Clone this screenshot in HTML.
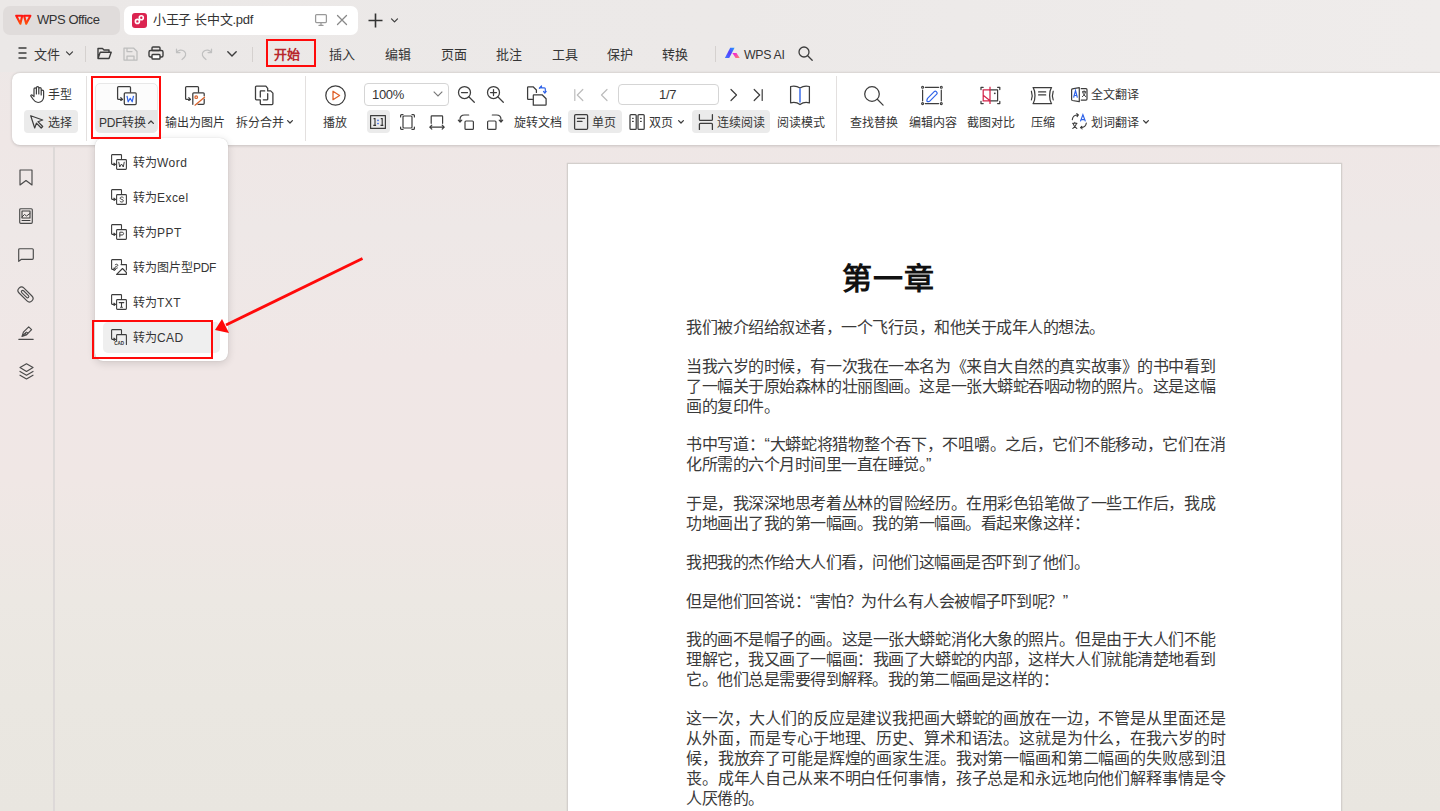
<!DOCTYPE html>
<html lang="zh-CN"><head><meta charset="utf-8">
<style>
*{margin:0;padding:0;box-sizing:border-box}
html,body{width:1440px;height:811px;overflow:hidden}
body{background:linear-gradient(180deg,#ECE8E7 0px,#EFE7E6 140px,#EEE8E7 230px,#F0E7E6 360px,#F0E7E5 480px,#ECE8E3 600px,#EAE7E1 700px,#E9E6E0 811px);font-family:"Liberation Sans",sans-serif;color:#333;position:relative}
.a{position:absolute}
.t{position:absolute;white-space:nowrap;font-size:12px;line-height:16px;color:#353535}
.m{font-size:13px;line-height:18px;top:46px}
svg{position:absolute;overflow:visible}
svg .s{fill:none;stroke:#3d3d3d;stroke-width:1.25;stroke-linecap:round;stroke-linejoin:round}
svg .g{fill:none;stroke:#bcbcbc;stroke-width:1.25;stroke-linecap:round;stroke-linejoin:round}
.btnbg{position:absolute;background:#EBEBEB;border-radius:4px}
.sep{position:absolute;width:1px;background:#E3E0DF}
.doc .l{position:absolute;left:686px;white-space:nowrap;font-size:16px;letter-spacing:-0.5px;line-height:20px;color:#3a3a3a}
.doc .j{width:529px;white-space:normal;text-align:justify;text-align-last:justify;height:20px;overflow:visible}
.doc .w{width:539px}
</style></head><body>
<!-- ===== top bar ===== -->
<div class="a" style="left:0;top:0;width:1440px;height:72px;background:linear-gradient(90deg,#EBE8E7,#ECE9E8 50%,#EFECEB)"></div>
<div class="a" style="left:3px;top:6px;width:117px;height:29px;background:#E0DCDB;border-radius:7px"></div>
<svg style="left:0;top:0" width="40" height="40" viewBox="0 0 40 40"><defs><linearGradient id="wl" x1="0" y1="14" x2="0" y2="25" gradientUnits="userSpaceOnUse"><stop offset="0" stop-color="#FF0A14"/><stop offset="1" stop-color="#FF5A0A"/></linearGradient></defs><path d="M16.2 15.7h6L20.4 23.7z M24.1 15.7h6.3L26.2 23.7z" fill="none" stroke="url(#wl)" stroke-width="2.1" stroke-linejoin="round"/></svg>
<div class="t" style="left:37px;top:11px;font-size:13px;line-height:18px;letter-spacing:-0.45px;color:#333">WPS Office</div>
<div class="a" style="left:124px;top:6px;width:234px;height:29px;background:#fff;border-radius:7px"></div>
<div class="a" style="left:132px;top:13px;width:15px;height:15px;background:#DB2450;border-radius:3px"></div>
<svg style="left:132px;top:13px" width="15" height="15" viewBox="0 0 15 15"><circle cx="5.4" cy="8.4" r="2" fill="none" stroke="#fff" stroke-width="1.6"/><circle cx="9.3" cy="4.8" r="2" fill="none" stroke="#fff" stroke-width="1.6"/></svg>
<div class="t" style="left:153px;top:11px;font-size:13px;line-height:18px;letter-spacing:-0.3px;color:#333">小王子 长中文.pdf</div>
<svg style="left:315px;top:14px" width="12" height="12" viewBox="0 0 12 12"><rect x="0.6" y="0.6" width="10.8" height="8" rx="1" class="g" style="stroke:#999"/><path d="M4 11.4h4M6 8.6v2.8" class="g" style="stroke:#999"/></svg>
<svg style="left:337px;top:15px" width="10" height="10" viewBox="0 0 10 10"><path d="M0.5 0.5l9 9M9.5 0.5l-9 9" class="g" style="stroke:#888"/></svg>
<svg style="left:368px;top:13px" width="15" height="15" viewBox="0 0 15 15"><path d="M7.5 0.5v14M0.5 7.5h14" fill="none" stroke="#333" stroke-width="1.6"/></svg>
<svg style="left:391px;top:18px" width="7" height="5" viewBox="0 0 7 5"><path d="M0.5 0.8l3 3 3-3" class="s" style="stroke-width:1.2"/></svg>

<!-- ===== menu row ===== -->
<svg style="left:18px;top:47px" width="9" height="12" viewBox="0 0 9 12"><path d="M0.5 1h8M0.5 6h8M0.5 11h8" fill="none" stroke="#3d3d3d" stroke-width="1.4"/></svg>
<div class="t m" style="left:34px">文件</div>
<svg style="left:66px;top:51px" width="7" height="5" viewBox="0 0 7 5"><path d="M0.5 0.8l3 3 3-3" class="s" style="stroke-width:1.2"/></svg>
<div class="sep" style="left:85px;top:46px;height:16px;background:#D5D1CF"></div>
<svg style="left:97px;top:47px" width="15" height="13" viewBox="0 0 15 13"><path d="M1 11.5V1.5h4.5l1.5 1.5h5v2M1 11.5l2.2-6.3h11L12 11.5z" class="s" style="stroke-width:1.4"/></svg>
<svg style="left:123px;top:47px" width="15" height="14" viewBox="0 0 15 14"><path d="M1 1h9.5l3.5 3.5V13H1z M4 1v3.5h5 M4 13V9h7v4" class="g" style="stroke:#bdbdbd"/></svg>
<svg style="left:148px;top:46px" width="16" height="14" viewBox="0 0 16 14"><rect x="4" y="1" width="8" height="3.5" rx="1" class="s" style="stroke-width:1.4"/><rect x="1" y="4.5" width="14" height="6.5" rx="1.5" class="s" style="stroke-width:1.4"/><rect x="4" y="8.5" width="8" height="4.5" rx="0.8" class="s" style="stroke-width:1.4;fill:#fff"/></svg>
<svg style="left:175px;top:48px" width="12" height="12" viewBox="0 0 12 12"><path d="M1.5 1v3.5h3.5M1.5 4.5C3 2 7 1 9.5 3.5s1 5.5-2.5 8" class="g" style="stroke:#c0c0c0"/></svg>
<svg style="left:201px;top:48px" width="12" height="12" viewBox="0 0 12 12"><path d="M10.5 1v3.5H7M10.5 4.5C9 2 5 1 2.5 3.5s-1 5.5 2.5 8" class="g" style="stroke:#c0c0c0"/></svg>
<svg style="left:227px;top:51px" width="10" height="6" viewBox="0 0 10 6"><path d="M0.8 0.8l4.2 4.2 4.2-4.2" class="s" style="stroke-width:1.4"/></svg>
<div class="sep" style="left:252px;top:47px;height:15px;background:#D5D1CF"></div>
<div class="t m" style="left:274px;color:#B8272C;font-weight:bold">开始</div>
<div class="a" style="left:274px;top:65px;width:25px;height:2px;background:#C41F1F"></div>
<div class="t m" style="left:329px">插入</div>
<div class="t m" style="left:385px">编辑</div>
<div class="t m" style="left:441px">页面</div>
<div class="t m" style="left:496px">批注</div>
<div class="t m" style="left:552px">工具</div>
<div class="t m" style="left:607px">保护</div>
<div class="t m" style="left:662px">转换</div>
<div class="sep" style="left:715px;top:46px;height:16px;background:#D5D1CF"></div>
<svg style="left:724px;top:47px" width="17" height="12" viewBox="0 0 17 12"><defs><linearGradient id="ai1" x1="0" y1="1" x2="1" y2="0"><stop offset="0" stop-color="#3C7BFF"/><stop offset="0.5" stop-color="#5A3CFF"/><stop offset="1" stop-color="#1FA0FF"/></linearGradient><linearGradient id="ai2" x1="0" y1="0" x2="1" y2="1"><stop offset="0" stop-color="#F010F0"/><stop offset="1" stop-color="#FF8A60"/></linearGradient></defs><path d="M0.9 11L6.2 0.8h4.4L5.2 11z" fill="url(#ai1)"/><path d="M8.4 5.9h4.1l3.2 5.1h-4.1z" fill="url(#ai2)"/></svg>
<div class="t m" style="left:744px;font-size:12.3px;letter-spacing:-0.3px">WPS AI</div>
<svg style="left:798px;top:46px" width="15" height="15" viewBox="0 0 15 15"><circle cx="6" cy="6" r="5" class="s" style="stroke-width:1.3"/><path d="M9.7 9.7l4.5 4.5" class="s" style="stroke-width:1.3"/></svg>

<!-- ===== ribbon ===== -->
<div class="a" style="left:12px;top:72px;width:1428px;height:73px;background:#fff;border-radius:8px 0 0 8px;border-top:1px solid #DCD8D6;box-shadow:0 1px 3px rgba(0,0,0,.17)"></div>
<div class="sep" style="left:86px;top:76px;height:65px"></div>
<div class="sep" style="left:305px;top:76px;height:65px"></div>
<div class="sep" style="left:836px;top:76px;height:65px"></div>

<!-- group 1 -->
<svg style="left:30px;top:86px" width="15" height="17" viewBox="0 0 15 17"><path d="M4 9V3a1.2 1.2 0 0 1 2.4 0v5V1.8a1.2 1.2 0 0 1 2.4 0V8V2.8a1.2 1.2 0 0 1 2.4 0V9V5.3a1.2 1.2 0 0 1 2.4 0V11c0 3-2.3 5.5-5.5 5.5c-2.3 0-3.6-1.2-4.8-3L0.9 10.2c-.5-.8.5-1.7 1.3-1.1L4 10.6z" class="s" style="stroke-width:1.2"/></svg>
<div class="t" style="left:48px;top:87px">手型</div>
<div class="btnbg" style="left:24px;top:110px;width:54px;height:23px"></div>
<svg style="left:30px;top:115px" width="14" height="14" viewBox="0 0 14 14"><path d="M0.7 0.7l12 4.3-4.8 1.7 4.8 4.8-1.5 1.5-4.8-4.8-1.7 4.8z" class="s" style="stroke-width:1.2"/></svg>
<div class="t" style="left:48px;top:115px">选择</div>

<!-- group 2 -->
<div class="a" style="left:95px;top:83px;width:63px;height:50px;border-radius:5px;background:#FCFCFC;border:1px solid #E8E8E8;overflow:hidden"><div class="a" style="left:-1px;top:26px;width:63px;height:23px;background:#E6E6E6"></div></div>
<svg style="left:117px;top:86px" width="20" height="19" viewBox="0 0 20 19"><path d="M13.5 6V1.6c0-.6-.4-1-1-1H1.6c-.6 0-1 .4-1 1v10.8c0 .6.4 1 1 1H5.5 M3.8 11.6l1.7 1.8-1.7 1" class="s" style="stroke-width:1.25"/><rect x="7.3" y="6.8" width="11.9" height="11.8" rx="1" class="s" style="stroke-width:1.25"/><path d="M10 9.8l1.2 6 2-3.5 2 3.5 1.3-6" fill="none" stroke="#2F63E8" stroke-width="1.2" stroke-linejoin="round"/></svg>
<div class="t" style="left:99px;top:115px;letter-spacing:-0.2px">PDF转换</div>
<svg style="left:148px;top:120px" width="6" height="4" viewBox="0 0 6 4"><path d="M0.6 3.4L3 1l2.4 2.4" class="s" style="stroke-width:1.3"/></svg>
<svg style="left:185px;top:86px" width="20" height="19" viewBox="0 0 20 19"><path d="M13.5 6V1.6c0-.6-.4-1-1-1H1.6c-.6 0-1 .4-1 1v10.8c0 .6.4 1 1 1H5.5 M3.8 11.6l1.7 1.8-1.7 1" class="s" style="stroke-width:1.25"/><path d="M7.8 18.3V7.8c0-.6.4-1 1-1h9.4c.6 0 1 .4 1 1v2 M19.2 13v4.3c0 .6-.4 1-1 1H13" class="s" style="stroke-width:1.25"/><circle cx="11.2" cy="11.2" r="1.3" fill="none" stroke="#D9622B" stroke-width="1.2"/><path d="M10 19.2L19.5 11.2" fill="none" stroke="#D9622B" stroke-width="1.25" stroke-linecap="round"/></svg>
<div class="t" style="left:165px;top:115px">输出为图片</div>
<svg style="left:244px;top:80px" width="40" height="30" viewBox="0 0 40 30"><path d="M16.3 19.8H12.5c-.6 0-1-.4-1-1V7.1c0-.6.4-1 1-1H21.9L23.7 8.3V10.9 M23.7 10.9H26.7L28.9 13.1V23.6c0 .6-.4 1-1 1H17.3c-.6 0-1-.4-1-1V19.8 M16.3 17V11.4c0-.3.2-.5.5-.5H20.7 M23.7 13.7V19.3c0 .3-.2.5-.5.5H19.3" class="s" style="stroke-width:1.3"/></svg>
<div class="t" style="left:236px;top:115px">拆分合并</div>
<svg style="left:287px;top:120px" width="6" height="4" viewBox="0 0 6 4"><path d="M0.6 0.6L3 3l2.4-2.4" class="s" style="stroke-width:1.3"/></svg>

<!-- group 3 -->
<svg style="left:325px;top:85px" width="21" height="21" viewBox="0 0 21 21"><circle cx="10.5" cy="10.5" r="9.7" class="s" style="stroke-width:1.25"/><path d="M8 6.3v8.4l6.6-4.2z" fill="none" stroke="#E0612A" stroke-width="1.3" stroke-linejoin="round"/></svg>
<div class="t" style="left:323px;top:115px">播放</div>
<div class="a" style="left:364px;top:83px;width:85px;height:23px;border:1px solid #D5D5D5;border-radius:4px;background:#fff"></div>
<div class="t" style="left:372px;top:86px;font-size:13px;line-height:18px;letter-spacing:-0.3px">100%</div>
<svg style="left:433px;top:91px" width="10" height="6" viewBox="0 0 10 6"><path d="M0.7 0.7l4.3 4.3 4.3-4.3" fill="none" stroke="#777" stroke-width="1.1"/></svg>
<svg style="left:458px;top:86px" width="17" height="17" viewBox="0 0 17 17"><circle cx="6.5" cy="6.5" r="6" class="s" style="stroke-width:1.25"/><path d="M3.5 6.5h6M10.8 10.8l5.5 5.5" class="s" style="stroke-width:1.25"/></svg>
<svg style="left:487px;top:86px" width="17" height="17" viewBox="0 0 17 17"><circle cx="6.5" cy="6.5" r="6" class="s" style="stroke-width:1.25"/><path d="M3.5 6.5h6M6.5 3.5v6M10.8 10.8l5.5 5.5" class="s" style="stroke-width:1.25"/></svg>
<svg style="left:527px;top:85px" width="20" height="21" viewBox="0 0 20 21"><path d="M5.5 14.3H1.2c-.4 0-.6-.3-.6-.6V2.4c0-.4.3-.6.6-.6h4.9l3.3 3.2v2.4" class="s" style="stroke-width:1.25"/><path d="M6.3 20.2v-9.8c0-.4.3-.6.6-.6h8.2l4 4v5.8c0 .4-.3.6-.6.6H6.9c-.4 0-.6-.3-.6-.6z" class="s" style="stroke-width:1.25"/><path d="M12.8 3.4l1.7-1.8v1.2h2.8c.6 0 1 .4 1 1v3.6 M16.5 6.4l1.3 1.8 1.4-1.8" fill="none" stroke="#2F63E8" stroke-width="1.2" stroke-linecap="round" stroke-linejoin="round"/><path d="M12.3 3.1l2.2-2.1" fill="none" stroke="#2F63E8" stroke-width="1.2" stroke-linecap="round"/></svg>
<div class="btnbg" style="left:367px;top:110px;width:23px;height:23px"></div>
<svg style="left:370px;top:115px" width="16" height="14" viewBox="0 0 16 14"><rect x="0.6" y="0.6" width="14.8" height="12.8" class="s" style="stroke-width:1.2"/><path d="M3.6 3.6h1.4v6.8M3.3 10.4h2.8M10.8 3.6h1.4v6.8M10.5 10.4h2.8" fill="none" stroke="#333" stroke-width="1.1"/><circle cx="8" cy="5.4" r="0.8" fill="#2F63E8"/><circle cx="8" cy="8.6" r="0.8" fill="#2F63E8"/></svg>
<svg style="left:400px;top:114px" width="15" height="16" viewBox="0 0 15 16"><rect x="3" y="2" width="9" height="12" rx="1" class="s" style="stroke-width:1.2"/><path d="M0.6 3V1.6c0-.6.4-1 1-1H3 M12 0.6h1.4c.6 0 1 .4 1 1V3 M14.4 13v1.4c0 .6-.4 1-1 1H12 M3 15.4H1.6c-.6 0-1-.4-1-1V13" class="s" style="stroke-width:1.2"/></svg>
<svg style="left:429px;top:115px" width="16" height="15" viewBox="0 0 16 15"><path d="M2.2 8.3V1.4c0-.4.3-.6.6-.6H13c.4 0 .6.3.6.6v6.9 M0.8 12.2h14.4 M2.8 10.2L0.8 12.2l2 2 M13.2 10.2l2 2-2 2" class="s" style="stroke-width:1.2"/></svg>
<svg style="left:458px;top:114px" width="16" height="16" viewBox="0 0 16 16"><path d="M10.7 1H6.5C3.7 1 2 2.6 2 5.5V8 M0.3 6.2L2 8l1.8-1.8" class="s" style="stroke-width:1.2"/><rect x="7" y="7" width="8.4" height="8.4" rx="1" class="s" style="stroke-width:1.2"/></svg>
<svg style="left:487px;top:114px" width="16" height="16" viewBox="0 0 16 16"><path d="M5.3 1h4.2C12.3 1 14 2.6 14 5.5V8 M15.7 6.2L14 8l-1.8-1.8" class="s" style="stroke-width:1.2"/><rect x="0.6" y="7" width="8.4" height="8.4" rx="1" class="s" style="stroke-width:1.2"/></svg>
<div class="t" style="left:514px;top:115px">旋转文档</div>

<!-- group 4 -->
<svg style="left:574px;top:89px" width="10" height="12" viewBox="0 0 10 12"><path d="M0.8 0.5v11M8.8 0.5L3.3 6l5.5 5.5" class="g" style="stroke-width:1.2"/></svg>
<svg style="left:600px;top:89px" width="8" height="12" viewBox="0 0 8 12"><path d="M7 0.5L1.5 6 7 11.5" class="g" style="stroke-width:1.2"/></svg>
<div class="a" style="left:618px;top:84px;width:101px;height:21px;border:1px solid #D5D5D5;border-radius:4px;background:#fff"></div>
<div class="t" style="left:659px;top:86px;font-size:13px;line-height:18px;letter-spacing:-0.3px">1/7</div>
<svg style="left:730px;top:89px" width="8" height="12" viewBox="0 0 8 12"><path d="M1 0.5L6.5 6 1 11.5" class="s" style="stroke-width:1.2"/></svg>
<svg style="left:753px;top:89px" width="10" height="12" viewBox="0 0 10 12"><path d="M9.2 0.5v11M1.2 0.5L6.7 6l-5.5 5.5" class="s" style="stroke-width:1.2"/></svg>
<svg style="left:790px;top:85px" width="20" height="20" viewBox="0 0 20 20"><path d="M0.6 1.5c3.5-.9 6.5-.5 9.4 1.6c2.9-2.1 5.9-2.5 9.4-1.6v16.4c-3.5-.9-6.5-.5-9.4 1.6c-2.9-2.1-5.9-2.5-9.4-1.6z" class="s" style="stroke-width:1.25"/><path d="M10 3.5v14" fill="none" stroke="#2F63E8" stroke-width="1.4"/></svg>
<div class="btnbg" style="left:568px;top:110px;width:54px;height:23px"></div>
<svg style="left:574px;top:114px" width="14" height="16" viewBox="0 0 14 16"><rect x="0.6" y="0.6" width="13" height="14.8" rx="1.2" class="s" style="stroke-width:1.25"/><path d="M3.4 4.3h7.3M3.4 7.4h4.6" class="s" style="stroke-width:1.2"/></svg>
<div class="t" style="left:592px;top:115px">单页</div>
<svg style="left:629px;top:114px" width="16" height="16" viewBox="0 0 16 16"><rect x="1" y="0.6" width="6.2" height="14.8" rx="1" class="s" style="stroke-width:1.25"/><rect x="9" y="0.6" width="6.2" height="14.8" rx="1" class="s" style="stroke-width:1.25"/><path d="M3.6 4.3h.6M3.6 7.4h.6M11.6 4.3h.6M11.6 7.4h.6" class="s" style="stroke-width:1.3"/></svg>
<div class="t" style="left:649px;top:115px">双页</div>
<svg style="left:678px;top:120px" width="6" height="4" viewBox="0 0 6 4"><path d="M0.6 0.6L3 3l2.4-2.4" class="s" style="stroke-width:1.3"/></svg>
<div class="btnbg" style="left:692px;top:110px;width:78px;height:23px"></div>
<svg style="left:698px;top:114px" width="16" height="16" viewBox="0 0 16 16"><path d="M1.4 0.6V5.4c0 .6.4 1 1 1H13.4c.6 0 1-.4 1-1V0.6 M1.4 15.4V10.3c0-.6.4-1 1-1H13.4c.6 0 1 .4 1 1V15.4" class="s" style="stroke-width:1.25"/></svg>
<div class="t" style="left:717px;top:115px">连续阅读</div>
<div class="t" style="left:777px;top:115px">阅读模式</div>

<!-- group 5 -->
<svg style="left:864px;top:86px" width="20" height="20" viewBox="0 0 20 20"><circle cx="8" cy="8" r="7.3" class="s" style="stroke-width:1.25"/><path d="M13.3 13.3l5.8 5.8" class="s" style="stroke-width:1.25"/></svg>
<div class="t" style="left:850px;top:115px">查找替换</div>
<svg style="left:920px;top:85px" width="23" height="21" viewBox="0 0 23 21"><path d="M5.3 2.3H18.6M5.3 18.6H18.6M2.6 5.2V15.8M21.3 5.2V15.8" class="s" style="stroke-width:1.2"/><g fill="none" stroke="#3d3d3d" stroke-width="1.1"><circle cx="2.6" cy="2.3" r="1"/><circle cx="21.3" cy="2.3" r="1"/><circle cx="2.6" cy="18.6" r="1"/><circle cx="21.3" cy="18.6" r="1"/></g><path d="M7.3 13.6l6.9-6.9c.6-.6 1.5-.6 2.1 0l.4.4c.6.6.6 1.5 0 2.1l-6.9 6.9c-.4.4-1 .6-1.5.6H7.8c-.5 0-.9-.4-.9-.9v-.5c0-.6.2-1.1.6-1.5z" fill="none" stroke="#2F63E8" stroke-width="1.2" stroke-linejoin="round"/></svg>
<div class="t" style="left:909px;top:115px">编辑内容</div>
<svg style="left:979px;top:85px" width="23" height="21" viewBox="0 0 23 21"><path d="M2 4.5V2.3h2.2M18.6 2.3h2.2v2.2M20.8 16.4v2.2h-2.2M4.2 18.6H2v-2.2" class="s" style="stroke-width:1.25"/><path d="M11 4.9h7.6v10.9H11" class="s" style="stroke-width:1.2"/><circle cx="15.8" cy="8.3" r="0.9" fill="#3d3d3d"/><path d="M11 1.8V19 M11 4.9H4.2V15.8H11 M4.5 10.6L10.8 15.6" fill="none" stroke="#D4254B" stroke-width="1.25"/></svg>
<div class="t" style="left:967px;top:115px">截图对比</div>
<svg style="left:1026px;top:82px" width="30" height="25" viewBox="0 0 30 25"><path d="M7 5.5H25.6 M7 21.6H25.6 M7.2 5.6C9.6 9.5 9.6 17.6 7.2 21.5 M25.4 5.6C23 9.5 23 17.6 25.4 21.5" class="s" style="stroke-width:1.25"/><path d="M5.4 9.2C6.3 11.8 6.3 15.3 5.4 17.9 M27.2 9.2C26.3 11.8 26.3 15.3 27.2 17.9 M12.6 9.9H19.7 M12.6 12.9H19.7" class="s" style="stroke-width:1.2"/></svg>
<div class="t" style="left:1031px;top:115px">压缩</div>
<svg style="left:1070px;top:87px" width="18" height="15" viewBox="0 0 18 15"><path d="M9.3 0.7L2.4 1.9c-.5.1-.8.5-.8 1v9.6c0 .5.3.9.8 1l6.9 1.2z M11.2 1.7h4.8c.6 0 1 .4 1 1v9.4c0 .6-.4 1-1 1h-4.8" class="s" style="stroke-width:1.2"/><path d="M3.6 10.6L5.5 3.6l1.9 7M4.2 8.5h2.6" fill="none" stroke="#2F63E8" stroke-width="1.2"/><path d="M12.4 4.8h3.4M14.1 3.8v1M12.8 5.2c.5 2 1.5 3.6 3 4.4M15.4 5.2c-.5 2-1.5 3.6-3 4.4" class="s" style="stroke-width:1"/></svg>
<div class="t" style="left:1091px;top:87px">全文翻译</div>
<svg style="left:1071px;top:113px" width="17" height="17" viewBox="0 0 17 17"><path d="M1.3 6.6C1.6 3.6 3.6 2 6.8 2M5.8 0.7l1.6 1.3-1.3 1.6 M15.3 10c-.3 3-2.3 4.6-5.5 4.6M10.8 13.3l-1.3 1.3 1.6 1.3" class="s" style="stroke-width:1.15"/><path d="M9.4 8.4L11.9 1.8l2.5 6.6M10.1 6.6h3.6" fill="none" stroke="#2F63E8" stroke-width="1.2"/><path d="M1.6 10.2h4.4M3.8 9.2v1M2.1 10.6c.7 2.4 2 4 3.8 4.8M5.5 10.6c-.7 2.4-2 4-3.8 4.8" class="s" style="stroke-width:1.05"/></svg>
<div class="t" style="left:1091px;top:115px">划词翻译</div>
<svg style="left:1143px;top:120px" width="6" height="4" viewBox="0 0 6 4"><path d="M0.6 0.6L3 3l2.4-2.4" class="s" style="stroke-width:1.3"/></svg>

<!-- ===== sidebar ===== -->
<div class="a" style="left:53px;top:146px;width:2px;height:665px;background:#DDD9D8"></div>
<svg style="left:19px;top:169px" width="14" height="17" viewBox="0 0 14 17"><path d="M1 1h12v15l-6-4.5L1 16z" class="s" style="stroke-width:1.15;stroke:#4a4a4a"/></svg>
<svg style="left:19px;top:208px" width="14" height="16" viewBox="0 0 14 16"><rect x="0.7" y="0.7" width="12.6" height="14.6" rx="1" class="s" style="stroke-width:1.15;stroke:#4a4a4a"/><rect x="3" y="3" width="8" height="7" class="s" style="stroke-width:1.1"/><path d="M3 9l2.5-2.5 2 1.5 3.5-2.5M3 12.5h8" class="s" style="stroke-width:1"/></svg>
<svg style="left:18px;top:248px" width="16" height="14" viewBox="0 0 16 14"><path d="M0.7 13.3V1.7c0-.6.4-1 1-1h12.6c.6 0 1 .4 1 1v8.6c0 .6-.4 1-1 1H3.5z" class="s" style="stroke-width:1.15;stroke:#4a4a4a"/></svg>
<svg style="left:17px;top:286px" width="17" height="17" viewBox="0 0 17 17"><g transform="rotate(-45 8.5 8.5)"><rect x="5" y="-0.6" width="7" height="18.2" rx="3.5" class="s" style="stroke-width:1.15;stroke:#4a4a4a"/><rect x="7.2" y="3.2" width="2.6" height="9.5" rx="1.3" class="s" style="stroke-width:1.1;stroke:#4a4a4a"/></g></svg>
<svg style="left:18px;top:326px" width="16" height="14" viewBox="0 0 16 14"><path d="M4 10.5l1.4-4.4 5.3-5.3 2.9 2.9-5.3 5.3z M8.6 6.2a1.1 1.1 0 1 1-.1 0 M4 10.5l3.5-3.5 M0.8 13.3h14.4" class="s" style="stroke-width:1.15;stroke:#4a4a4a"/></svg>
<svg style="left:19px;top:363px" width="15" height="17" viewBox="0 0 15 17"><path d="M7.5 0.8l6.5 3.8-6.5 3.8L1 4.6z M1 8.4l6.5 3.8 6.5-3.8 M1 12.2l6.5 3.8 6.5-3.8" class="s" style="stroke-width:1.15;stroke:#4a4a4a"/></svg>

<!-- ===== page ===== -->
<div class="a" style="left:567px;top:163px;width:775px;height:660px;background:#fff;border:1px solid #D3CFCC;box-shadow:0 0 1px rgba(0,0,0,.18)"></div>
<div class="doc">
<div class="a" style="left:842px;top:259px;font-size:30px;letter-spacing:1px;line-height:40px;font-weight:bold;color:#111">第一章</div>
<div class="l" style="top:318px">我们被介绍给叙述者，一个飞行员，和他关于成年人的想法。</div>
<div class="l j" style="top:357px">当我六岁的时候，有一次我在一本名为《来自大自然的真实故事》的书中看到</div>
<div class="l j" style="top:377px">了一幅关于原始森林的壮丽图画。这是一张大蟒蛇吞咽动物的照片。这是这幅</div>
<div class="l" style="top:397px">画的复印件。</div>
<div class="l j w" style="top:435px">书中写道：“大蟒蛇将猎物整个吞下，不咀嚼。之后，它们不能移动，它们在消</div>
<div class="l" style="top:455px">化所需的六个月时间里一直在睡觉。”</div>
<div class="l j" style="top:494px">于是，我深深地思考着丛林的冒险经历。在用彩色铅笔做了一些工作后，我成</div>
<div class="l" style="top:514px">功地画出了我的第一幅画。我的第一幅画。看起来像这样：</div>
<div class="l" style="top:553px">我把我的杰作给大人们看，问他们这幅画是否吓到了他们。</div>
<div class="l" style="top:592px">但是他们回答说：“害怕？为什么有人会被帽子吓到呢？”</div>
<div class="l j" style="top:630px">我的画不是帽子的画。这是一张大蟒蛇消化大象的照片。但是由于大人们不能</div>
<div class="l j" style="top:650px">理解它，我又画了一幅画：我画了大蟒蛇的内部，这样大人们就能清楚地看到</div>
<div class="l" style="top:670px">它。他们总是需要得到解释。我的第二幅画是这样的：</div>
<div class="l j w" style="top:709px">这一次，大人们的反应是建议我把画大蟒蛇的画放在一边，不管是从里面还是</div>
<div class="l j w" style="top:729px">从外面，而是专心于地理、历史、算术和语法。这就是为什么，在我六岁的时</div>
<div class="l j w" style="top:749px">候，我放弃了可能是辉煌的画家生涯。我对第一幅画和第二幅画的失败感到沮</div>
<div class="l j w" style="top:769px">丧。成年人自己从来不明白任何事情，孩子总是和永远地向他们解释事情是令</div>
<div class="l" style="top:789px">人厌倦的。</div>
</div>

<!-- ===== dropdown menu ===== -->
<div class="a" style="left:95px;top:138px;width:133px;height:223px;background:#fff;border-radius:8px;box-shadow:0 2px 8px rgba(0,0,0,.14),0 0 1px rgba(0,0,0,.2)"></div>
<div class="a" style="left:103px;top:322px;width:117px;height:31px;background:#EFEFEF;border-radius:5px"></div>
<svg style="left:111px;top:154px" width="16" height="16" viewBox="0 0 16 16"><path d="M10.5 4.5V1.2c0-.4-.3-.6-.6-.6H1.2c-.4 0-.6.3-.6.6v8.6c0 .4.3.6.6.6H4.5 M3 9.2l1.5 1.2L3 11.5" class="s" style="stroke-width:1.1"/><rect x="5.6" y="5.6" width="9.8" height="9.8" rx="0.8" class="s" style="stroke-width:1.1"/><path d="M7.8 8.2l.9 4.8 1.8-3 1.8 3 .9-4.8" class="s" style="stroke-width:1"/></svg>
<div class="t" style="left:133px;top:155px">转为<span style="letter-spacing:.45px">Word</span></div>
<svg style="left:111px;top:189px" width="16" height="16" viewBox="0 0 16 16"><path d="M10.5 4.5V1.2c0-.4-.3-.6-.6-.6H1.2c-.4 0-.6.3-.6.6v8.6c0 .4.3.6.6.6H4.5 M3 9.2l1.5 1.2L3 11.5" class="s" style="stroke-width:1.1"/><rect x="5.6" y="5.6" width="9.8" height="9.8" rx="0.8" class="s" style="stroke-width:1.1"/><path d="M12.3 8.6c-.4-.4-1-.6-1.6-.6-.9 0-1.6.5-1.6 1.2 0 1.5 3.3.9 3.3 2.6 0 .7-.7 1.2-1.7 1.2-.7 0-1.3-.2-1.7-.7" class="s" style="stroke-width:1"/></svg>
<div class="t" style="left:133px;top:190px">转为<span style="letter-spacing:.45px">Excel</span></div>
<svg style="left:111px;top:224px" width="16" height="16" viewBox="0 0 16 16"><path d="M10.5 4.5V1.2c0-.4-.3-.6-.6-.6H1.2c-.4 0-.6.3-.6.6v8.6c0 .4.3.6.6.6H4.5 M3 9.2l1.5 1.2L3 11.5" class="s" style="stroke-width:1.1"/><rect x="5.6" y="5.6" width="9.8" height="9.8" rx="0.8" class="s" style="stroke-width:1.1"/><path d="M8.8 13V8.2h2.4c.8 0 1.4.6 1.4 1.4s-.6 1.4-1.4 1.4H8.8" class="s" style="stroke-width:1"/></svg>
<div class="t" style="left:133px;top:225px">转为<span style="letter-spacing:.45px">PPT</span></div>
<svg style="left:111px;top:259px" width="16" height="16" viewBox="0 0 16 16"><path d="M10.5 4.5V1.2c0-.4-.3-.6-.6-.6H1.2c-.4 0-.6.3-.6.6v8.6c0 .4.3.6.6.6H2.5 M3 9.2l1.5 1.2L3 11.5" class="s" style="stroke-width:1.1"/><path d="M5.6 15.4L11.5 9.5l3.9 4v1.9z M15.4 11V5.6H10" class="s" style="stroke-width:1.1"/><path d="M4.2 5.8c.8-.8 2-.8 2.5 0 .5.8-.5 1.6-1.3 1.6s-1.5.7-1.2 1.4c.3.7 1.4.8 2.2.2" class="s" style="stroke-width:1"/></svg>
<div class="t" style="left:133px;top:260px">转为图片型<span style="letter-spacing:-.3px">PDF</span></div>
<svg style="left:111px;top:294px" width="16" height="16" viewBox="0 0 16 16"><path d="M10.5 4.5V1.2c0-.4-.3-.6-.6-.6H1.2c-.4 0-.6.3-.6.6v8.6c0 .4.3.6.6.6H4.5 M3 9.2l1.5 1.2L3 11.5" class="s" style="stroke-width:1.1"/><rect x="5.6" y="5.6" width="9.8" height="9.8" rx="0.8" class="s" style="stroke-width:1.1"/><path d="M8.2 8.6h4.6M10.5 8.6v4.6M9.6 13.2h1.8" class="s" style="stroke-width:1.1"/></svg>
<div class="t" style="left:133px;top:295px">转为<span style="letter-spacing:.45px">TXT</span></div>
<svg style="left:111px;top:329px" width="16" height="16" viewBox="0 0 16 16"><path d="M10.5 4.5V1.2c0-.4-.3-.6-.6-.6H1.2c-.4 0-.6.3-.6.6v8.6c0 .4.3.6.6.6H4.5 M3 9.2l1.5 1.2L3 11.5" class="s" style="stroke-width:1.1"/><path d="M5.6 11.5V6.4c0-.4.3-.8.8-.8h8.2c.4 0 .8.3.8.8v9" class="s" style="stroke-width:1.1"/><text x="3.2" y="15.6" font-size="4.6" font-family="Liberation Sans" font-weight="bold" fill="#333">CAD</text></svg>
<div class="t" style="left:133px;top:330px">转为<span style="letter-spacing:.45px">CAD</span></div>

<!-- ===== annotations ===== -->
<div class="a" style="left:266px;top:39px;width:50px;height:28px;border:2px solid #FF0A0A"></div>
<div class="a" style="left:91px;top:76px;width:70px;height:63px;border:2px solid #FF0A0A"></div>
<div class="a" style="left:92px;top:320px;width:121px;height:39px;border:2px solid #FF0A0A"></div>
<svg style="left:0;top:0" width="1440" height="811" viewBox="0 0 1440 811"><path d="M362.5 258.5L226 325" fill="none" stroke="#FF0A0A" stroke-width="2.8"/><path d="M215 330L222 319L229 333z" fill="#FF0A0A"/></svg>
</body></html>
